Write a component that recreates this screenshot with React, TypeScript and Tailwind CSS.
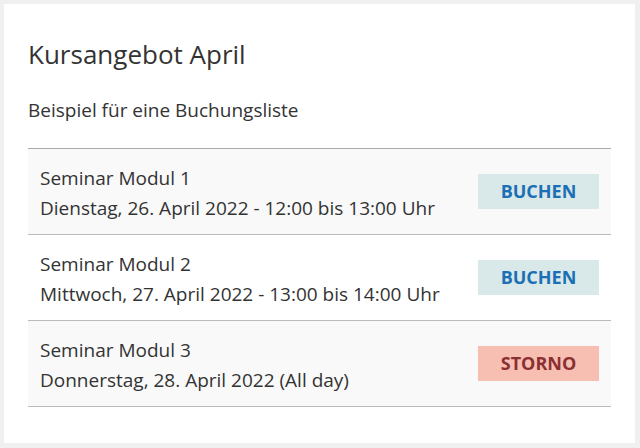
import React from "react";

const rows = [
  { title: "Seminar Modul 1", date: "Dienstag, 26. April 2022 - 12:00 bis 13:00 Uhr", action: "BUCHEN", bg: "bg-[#f9f9f9]" },
  { title: "Seminar Modul 2", date: "Mittwoch, 27. April 2022 - 13:00 bis 14:00 Uhr", action: "BUCHEN", bg: "bg-white" },
  { title: "Seminar Modul 3", date: "Donnerstag, 28. April 2022 (All day)", action: "STORNO", bg: "bg-[#f9f9f9]" },
];

export default function App() {
  return (
    <div className="w-[640px] h-[448px] bg-[#f0f0f0] p-1 pr-[5px] pb-[5px] text-[#333] [font-family:'Open_Sans',sans-serif]">
      <div className="h-full bg-white pl-6 pr-6 pt-[33px]">
        <h1 className="text-[26px] leading-[34px] font-normal">Kursangebot April</h1>
        <p className="mt-[26px] text-[19px] leading-[26px]">Beispiel für eine Buchungsliste</p>
        <div className="mt-[25px] border-t border-[#aaa]">
          {rows.map((r) => (
            <div key={r.title} className={`flex items-center justify-between border-b border-[#bbb] ${r.bg} h-[86px] pl-3 pr-3`}>
              <div className="text-[19px] leading-[30px] pt-[3px]">
                <div>{r.title}</div>
                <div>{r.date}</div>
              </div>
              <div
                className={
                  r.action === "BUCHEN"
                    ? "w-[121px] h-[35px] flex items-center justify-center bg-[#d9e8e8] text-[#1b6fb5] font-bold text-[18px]"
                    : "w-[121px] h-[35px] flex items-center justify-center bg-[#f6bfb1] text-[#8b2f33] font-bold text-[18px]"
                }
              >
                {r.action}
              </div>
            </div>
          ))}
        </div>
      </div>
    </div>
  );
}
